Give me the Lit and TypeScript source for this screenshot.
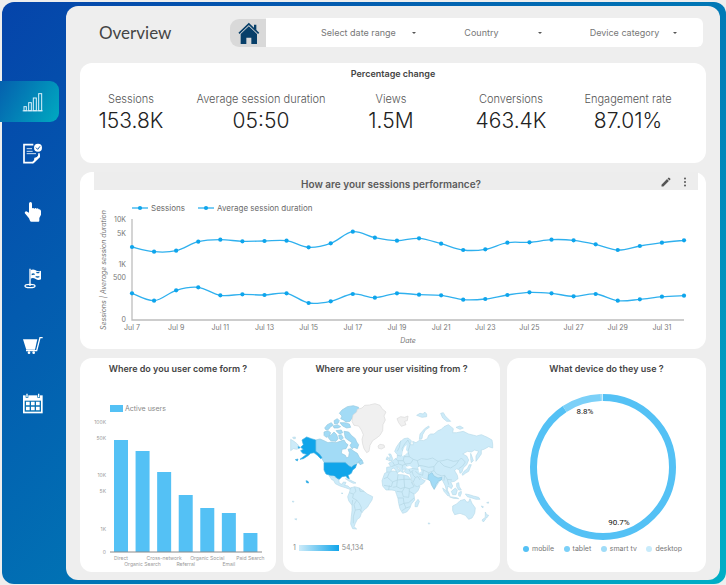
import { LitElement, html, svg, css } from "lit";
import { customElement } from "lit/decorators.js";

const FONT = css`Inter, "Open Sans", sans-serif`;

/* ---------- sidebar ---------- */

const navItems = [
  {
    label: "Overview",
    icon: svg`<g fill="none" stroke="#d9f1fb" stroke-width="3">
      <path d="M2 59.500H62"/><rect x="6" y="47" width="7" height="12"/><rect x="20" y="35" width="8" height="24"/>
      <rect x="34" y="21" width="9" height="38"/><rect x="50" y="8" width="9" height="51"/></g>`,
  },
  {
    label: "Reports",
    icon: svg`<path d="M34 8H6V62H32L51 44V34" fill="none" stroke="#fff" stroke-width="5"/>
      <path d="M31 64Q38 58 37 47Q45 48 50 38H54V45L35 64Z" fill="#fff"/>
      <path d="M14 20H30M14 28H32M14 35H42" stroke="#cfe2f3" stroke-width="3"/>
      <circle cx="48" cy="17" r="12" fill="#fff"/><path d="M42 17L47 22L54 13" fill="none" stroke="#0753aa" stroke-width="3"/>`,
  },
  {
    label: "Clicks",
    icon: svg`<path fill="#fff" d="M21 11Q21 6 25.500 6T30 11V25Q34 22 37 26Q41 22 44 26Q48 23 50 28Q56 27 57 33V44L52 54V62Q52 65 49 65H28Q25 65 24 62L21 55L8 39Q8 34 13 34L21 38Z"/>`,
  },
  {
    label: "Goals",
    icon: svg`<path d="M22 5H26V57H22Z" fill="#fff"/><path d="M26 9Q34 5 41 10T57 11V37Q49 41 41 36T26 35Z" fill="#fff"/>
      <path d="M29 20Q34 17 38 20V24Q34 22 29 25ZM41 27Q47 29 52 27V31Q47 33 41 31ZM43 14Q48 16 52 14V18Q47 20 43 18Z" fill="#0660ab"/>
      <ellipse cx="24" cy="57" rx="15" ry="5" fill="none" stroke="#fff" stroke-width="4"/>`,
  },
  {
    label: "Sales",
    icon: svg`<path d="M3 16H46L39 47H13Z" fill="#fff"/><path d="M62 11H54L44 50H12" fill="none" stroke="#fff" stroke-width="4"/>
      <circle cx="21" cy="56" r="4" fill="#fff"/><circle cx="35" cy="56" r="4" fill="#fff"/>`,
  },
  {
    label: "Calendar",
    icon: svg`<path d="M3 10H62V64H3Z" fill="#fff"/><path d="M11 8H19V17H11ZM46 8H54V17H46Z" fill="#0770b3"/>
      <path d="M13 5H17V15H13ZM48 5H52V15H48Z" fill="#fff"/><path d="M8 26H57V59H8Z" fill="#0770b3"/>
      <path d="M12 29H23V40H12ZM27 29H38V40H27ZM42 29H53V40H42ZM12 44H23V55H12ZM27 44H38V55H27ZM42 44H53V55H42Z" fill="#fff"/>`,
  },
];

@customElement("side-nav")
class SideNav extends LitElement {
  static styles = css`
    :host { display: block; padding-top: 79px; }
    nav { display: grid; grid-template-rows: 41px 61px 55px 79px 55px 61px; }
    a { display: flex; align-items: center; padding-left: 20px; }
    a.active {
      margin: 0 7px 0 -2px; padding-left: 22px; border-radius: 0 9px 9px 0;
      background: linear-gradient(120deg, #0560ae, #00aac1);
    }
    svg { display: block; width: 22px; height: 22px; }
  `;
  render() {
    return html`<nav aria-label="Sections">
      ${navItems.map((n, i) => html`<a href="#${n.label.toLowerCase()}" class=${i === 0 ? "active" : ""} aria-label=${n.label}>
        <svg viewBox="0 0 66 66" aria-hidden="true">${n.icon}</svg></a>`)}
    </nav>`;
  }
}

/* ---------- line chart ---------- */

// Heights above the baseline, in thirds of a chart unit.
const sessions = [219, 205, 208, 235, 241, 236, 237, 238, 218, 230, 265, 247, 238, 245, 229, 210, 212, 232, 233, 241, 239, 227, 210, 222, 232, 239];
const duration = [80, 58, 89, 98, 74, 77, 75, 80, 51, 56, 78, 67, 80, 76, 74, 61, 63, 75, 83, 80, 71, 78, 58, 62, 70, 73];
const BASE = 130;
const LEFT = 38;
const STEP = 552 / 25;

type Pt = [number, number];
const toPoints = (d: number[]): Pt[] => d.map((v, i) => [LEFT + i * STEP, BASE - v / 3]);
const smooth = (p: Pt[]) =>
  p.slice(1).reduce((s, c, k) => {
    const a = p[k], before = p[k - 1] ?? a, after = p[k + 2] ?? c;
    return `${s}C${a[0] + (c[0] - before[0]) / 6} ${a[1] + (c[1] - before[1]) / 6} ${c[0] - (after[0] - a[0]) / 6} ${c[1] - (after[1] - a[1]) / 6} ${c[0]} ${c[1]}`;
  }, `M${p[0][0]} ${p[0][1]}`);

@customElement("line-chart")
class LineChart extends LitElement {
  static styles = css`
    :host { display: block; }
    svg { display: block; width: 100%; font-family: ${FONT}; overflow: visible; }
    .line { fill: none; stroke: #2fb0ee; stroke-width: 1.3; }
    .dot { fill: #0ea5ec; }
    .axis { fill: none; stroke: #bdbdbd; stroke-width: 1.3; }
    .tick { font-size: 7px; fill: #777; }
    .end { text-anchor: end; }
    .mid { text-anchor: middle; }
    .name { font-size: 8px; fill: #6b6b6b; }
    .axis-name { font-size: 7px; font-style: italic; fill: #777; text-anchor: middle; }
  `;
  render() {
    const series = [sessions, duration].map(toPoints);
    return html`<svg viewBox="0 0 604 159" role="img" aria-label="Sessions and average session duration by date">
      ${[[38, "Sessions"], [104, "Average session duration"]].map(([x, name]) => svg`
        <path class="line" d="M${x} 18h16"/><circle class="dot" cx=${+x + 8} cy="18" r="2.1"/>
        <text class="name" x=${+x + 19} y="21">${name}</text>`)}
      ${([[30, "10K"], [44, "5K"], [75, "1K"], [88, "500"], [130, "0"]] as [number, string][]).map(([y, t]) =>
        svg`<text class="tick end" x="32" y=${y + 2}>${t}</text>`)}
      <path class="axis" d="M38 29V130H590"/>
      ${series.map((p) => svg`<path class="line" d=${smooth(p)}/>${p.map((c) => svg`<circle class="dot" cx=${c[0]} cy=${c[1]} r="2.1"/>`)}`)}
      ${Array.from({ length: 13 }, (_, i) => svg`<text class="tick mid" x=${LEFT + i * 2 * STEP} y="140">Jul ${7 + i * 2}</text>`)}
      <text class="axis-name" x="314" y="153">Date</text>
      <text class="axis-name" transform="translate(12 80) rotate(-90)">Sessions | Average session duration</text>
    </svg>`;
  }
}

/* ---------- bar chart ---------- */

const channels: [string, number][] = [
  ["Direct", 112], ["Organic Search", 101], ["Cross-network", 80], ["Referral", 57],
  ["Organic Social", 44], ["Email", 39], ["Paid Search", 19],
];

@customElement("channel-chart")
class ChannelChart extends LitElement {
  static styles = css`
    :host { display: block; }
    svg { display: block; width: 100%; font-family: ${FONT}; }
    .bar { fill: #54c1f5; }
    .axis { stroke: #8a8a8a; stroke-width: 1; }
    .name { font-size: 7px; fill: #888; }
    .tick { font-size: 5px; fill: #999; text-anchor: end; }
    .cat { font-size: 5px; fill: #999; text-anchor: middle; }
  `;
  render() {
    return html`<svg viewBox="0 0 196 172" role="img" aria-label="Active users by channel">
      <rect class="bar" x="30" y="7" width="13" height="7"/><text class="name" x="45" y="13">Active users</text>
      ${([[24, "100K"], [40, "50K"], [77, "10K"], [93, "5K"], [131, "1K"], [154, "0"]] as [number, string][]).map(([y, t]) =>
        svg`<text class="tick" x="26" y=${y + 2}>${t}</text>`)}
      ${channels.map(([name, h], i) => {
        const x = 34 + (i * 151) / 7;
        return svg`<rect class="bar" x=${x} y=${154 - h} width="14" height=${h}/>
          <text class="cat" x=${x + 7} y=${i % 2 ? 168 : 162}>${name}</text>`;
      })}
      <path class="axis" d="M30 154H182"/>
    </svg>`;
  }
}

/* ---------- world map ---------- */

const land = [
  // Mexico and Central America, Caribbean
  "M147 257L160 261 168 263 176 268 178 280 186 283 190 276 198 277 194 286 204 288 210 294 216 294 210 298 196 293 180 288 166 281 160 270 156 270 152 264Z",
  "M196 266L206 268 218 274 228 279 220 280 208 274Z",
  // South America
  "M212 294L224 290 238 294 252 304 262 312 278 320 276 330 268 342 262 352 252 360 244 370 240 382 232 388 226 400 222 410 230 417 218 416 212 402 214 380 216 362 216 346 206 332 203 320 208 308Z",
  // Africa, Madagascar
  "M314 250L322 246 340 243 350 245 354 254 366 254 384 258 392 268 400 282 408 289 420 289 414 302 402 314 404 330 394 342 390 354 380 366 368 370 360 356 356 340 354 326 350 314 346 302 336 300 318 300 308 288 306 272Z",
  "M406 338L414 328 418 334 412 350 405 350Z",
  // Europe and Asia
  "M344 184L350 170 360 156 372 146 384 144 394 152 392 164 400 164 398 154 408 158 420 150 430 152 442 146 446 136 452 132 462 132 474 122 484 118 492 110 505 104 520 116 518 128 530 128 550 124 566 132 590 138 604 134 622 142 636 150 638 162 638 174 626 170 612 178 604 180 604 192 594 206 588 214 588 198 596 184 584 180 574 186 562 184 548 192 560 198 566 210 560 224 550 234 546 246 540 250 538 240 530 236 524 242 532 256 534 266 524 274 512 276 518 288 514 296 504 288 502 300 508 312 500 304 496 288 486 268 478 274 468 290 462 298 454 284 450 270 436 267 424 262 418 258 426 268 436 272 430 280 412 290 406 288 394 268 390 252 380 250 372 244 378 238 368 238 370 248 362 244 356 232 350 230 360 244 352 248 342 234 336 236 332 246 320 246 320 232 332 230 326 220 336 214 346 206 352 204 352 194Z",
  // Britain, Ireland, Japan, Sakhalin
  "M326 212L330 200 326 192 332 192 338 206 336 212Z",
  "M318 208L322 200 326 204 323 210Z",
  "M546 252L552 244 562 236 568 224 574 224 570 234 566 244 556 250 548 256Z",
  "M572 190L576 200 580 212 574 218 572 206Z",
  // Arctic islands
  "M418 148L420 132 434 116 446 108 448 112 436 120 428 134 426 146Z",
  "M482 70L490 68 496 78 504 86 512 94 500 94 488 84Z",
  "M410 76L420 70 430 72 434 66 440 72 440 80 426 82Z",
  "M528 112L540 108 550 114 540 118Z",
  // South-East Asia
  "M488 294L498 302 510 316 504 318 492 304Z",
  "M508 320L530 323 536 326 520 325Z",
  "M514 304L526 294 532 300 528 314 518 314Z",
  "M530 280L536 278 538 290 544 300 536 300 530 290Z",
  "M536 308L544 304 544 310 540 320 536 316Z",
  "M556 312L568 314 580 318 596 322 600 328 588 328 576 324 562 320Z",
  // Australia, New Zealand
  "M518 348L530 342 540 332 554 328 560 336 566 336 570 326 576 340 586 354 584 370 576 384 566 388 556 376 540 370 524 374 518 362Z",
  "M616 366L620 374 626 376 620 384 616 380Z",
  "M606 390L616 382 618 386 610 396Z",
  // Chukotka
  "M32 148L42 154 52 162 60 174 50 178 40 176 32 182Z",
  "M38 142L46 141 46 146 40 146ZM604 348L610 350 608 354ZM620 338L626 336 625 340ZM44 387L50 386 49 390ZM36 334L42 334 40 337ZM184 309L188 309 187 312ZM444 399L450 400 447 403Z",
];
const canada = [
  // Mainland around Hudson Bay
  "M107 150L120 147 132 152 144 158 156 156 168 158 180 154 192 150 198 160 204 164 198 176 186 178 184 190 196 196 200 204 206 200 208 188 204 178 212 176 222 184 232 190 238 202 246 210 240 218 228 220 222 226 212 232 206 226 196 217 132 217 126 206 116 190 107 186Z",
  // Ellesmere and neighbours
  "M178 70L186 60 202 50 220 47 236 52 234 62 224 72 216 84 210 94 198 96 190 90 182 86 186 78Z",
  "M180 98L194 98 208 102 212 112 200 114 188 108Z",
  "M162 92L172 86 178 92 174 100 164 102Z",
  "M134 114L142 104 154 98 160 106 152 110 146 118 138 120Z",
  "M160 108L172 104 182 110 174 114 162 114Z",
  // Victoria, Banks, Baffin
  "M132 126L144 122 152 128 148 138 138 142 132 136Z",
  "M144 142L154 134 162 126 170 134 174 146 168 154 152 152Z",
  "M168 122L184 120 188 128 178 132Z",
  "M176 136L184 134 190 144 184 150 178 146Z",
  "M192 124L206 126 214 136 226 146 230 156 236 164 232 176 222 172 216 176 210 166 216 158 204 150 196 144Z",
  "M236 214L246 210 250 220 240 224Z",
];
const usa = [
  "M132 218L196 218 206 227 214 232 222 226 230 222 226 234 218 240 214 250 204 256 208 266 202 264 198 258 186 260 178 268 170 264 164 258 150 256 138 252 132 240Z",
  "M66 150L80 141 94 146 107 150 107 184 118 192 126 203 122 206 112 196 102 188 92 190 84 197 70 206 60 208 72 199 80 193 68 190 62 182 70 178 62 172 70 164Z",
  "M78 272L84 274 86 279 80 278ZM46 209L54 207 52 213ZM54 170L60 172 56 175Z",
];
const noData = [
  "M219 75L230 66 232 58 246 54 254 46 268 45 285 41 300 46 306 56 318 66 312 78 316 90 309 104 308 122 300 136 290 144 278 152 270 166 267 184 260 188 252 176 248 162 246 148 250 134 244 120 236 108 222 106 216 94Z",
  "M294 168L300 163 312 165 314 172 304 177 296 175Z",
  "M351 86L362 80 374 82 384 78 382 92 374 94 378 104 364 109 356 98Z",
];
const borders = [
  // South America
  "M208 308L220 312 228 304 224 292M220 312L218 324 230 330 238 340 244 352 242 364M218 330L216 346M230 330L222 344 226 360 220 380 220 400M238 294L240 304 252 304M226 360L240 358 246 368",
  // Africa
  "M328 248L322 262 312 266M322 262L338 276 352 270 354 254M338 276L334 290 312 286M352 270L372 268 372 256M372 268L392 268M352 270L350 290 338 292M350 290L362 296 374 292 372 268M374 292L388 296 402 290 394 276M350 304L366 306 374 292M366 306L370 320 386 322 388 304 402 312M354 324L370 324 372 340 386 338 402 324M372 340L358 346M372 340L378 354 390 350M326 300L328 286M388 304L388 296M378 354L366 362",
  // Europe
  "M352 196L362 198 370 190 366 176 374 162 384 150M362 152L358 172 352 184M384 150L390 164 384 184 388 200 400 208 392 220 376 222 370 212 354 212 346 206M354 212L356 222 344 226 334 230M356 222L368 226 376 222M368 226L366 236M376 222L384 232 400 236 414 238M370 212L372 200 388 200M344 226L338 216M386 236L392 248 400 240M376 200L370 190",
  // Asia
  "M400 208L412 212 424 206 442 208 458 204 474 214 488 212 502 208 520 214 536 212 544 204 556 216 548 228 536 236M412 212L416 226 430 228 446 232 462 230 474 214M416 226L414 238 430 240 446 248 462 242 462 230M430 240L428 256 416 252 406 244M446 248L444 268M406 262L414 260 420 270M400 256L406 262 400 276M480 216L492 228 512 234 528 224 536 212M462 242L470 252 486 258 494 256 502 268 516 270M494 256L492 272M502 268L506 284M396 244L400 256",
];

@customElement("world-map")
class WorldMap extends LitElement {
  static styles = css`
    :host { display: block; }
    svg { display: block; width: 100%; }
    path { stroke-width: 2; stroke-linejoin: round; }
    .land { fill: #cdebf9; stroke: #b8dbea; }
    .canada { fill: #a2dbf6; stroke: #94c8e0; }
    .usa { fill: #10a5ea; stroke: #3aaee2; }
    .none { fill: #f0f0f0; stroke: #dadada; }
    .border { fill: none; stroke: #b2d4e3; }
    .lake { fill: #fff; stroke: none; }
    .scale { display: flex; align-items: center; gap: 3px; padding: 10px 0 0 10px; font: 7px/9px ${FONT}; color: #888; }
    .ramp { width: 40px; height: 6px; background: linear-gradient(90deg, #cdebf9, #10a5ea); }
  `;
  render() {
    return html`<svg viewBox="9 30 651 400" role="img" aria-label="Users by country">
        ${land.map((d) => svg`<path class="land" d=${d}/>`)}
        ${borders.map((d) => svg`<path class="border" d=${d}/>`)}
        <path class="lake" d="M368 184L374 170 380 164 378 180 384 186 374 196 366 198ZM376 230L390 228 398 234 384 236ZM414 232L420 230 424 244 418 248Z"/>
        <path class="canada" d="M446 254L456 248 462 258 474 264 486 262 484 270 476 272 468 284 463 298 456 286 452 274 444 268Z"/>
        ${canada.map((d) => svg`<path class="canada" d=${d}/>`)}
        ${usa.map((d) => svg`<path class="usa" d=${d}/>`)}
        ${noData.map((d) => svg`<path class="none" d=${d}/>`)}
      </svg>
      <div class="scale"><span>1</span><span class="ramp"></span><span>54,134</span></div>`;
  }
}

/* ---------- donut ---------- */

const devices = [
  { name: "mobile", share: 90.7, color: "#54c1f5" },
  { name: "tablet", share: 8.8, color: "#7bd0f8" },
  { name: "smart tv", share: 0.3, color: "#a0dcf8" },
  { name: "desktop", share: 0.2, color: "#c8ebfb" },
];

@customElement("device-chart")
class DeviceChart extends LitElement {
  static styles = css`
    :host { display: block; }
    svg { display: block; width: 100%; font: 8px Roboto, sans-serif; }
    circle { fill: none; stroke-width: 7; }
    text { text-anchor: middle; fill: #111; }
    ul {
      display: flex; justify-content: space-between; list-style: none; margin: 0; padding: 0 24px 0 16px;
      font: 7px/9px ${FONT}; color: #777;
    }
    li { display: flex; align-items: center; gap: 3px; }
    .dot { width: 6px; height: 6px; border-radius: 50%; }
  `;
  render() {
    let start = 0;
    return html`<svg viewBox="0 0 199 156" role="img" aria-label="Share of users by device">
        ${devices.map((d) => {
          const ring = svg`<circle cx="96" cy="79" r="69.500" pathLength="100" stroke=${d.color}
            stroke-dasharray="${d.share} 100" stroke-dashoffset=${-start} transform="rotate(-90 96 79)"/>`;
          start += d.share;
          return ring;
        })}
        <text x="78" y="26">8.8%</text><text x="112" y="137">90.7%</text>
      </svg>
      <ul>${devices.map((d) => html`<li><span class="dot" style="background:${d.color}"></span>${d.name}</li>`)}</ul>`;
  }
}

/* ---------- page ---------- */

const filters = ["Select date range", "Country", "Device category"];
const stats = [
  ["Sessions", "153.8K"], ["Average session duration", "05:50"], ["Views", "1.5M"],
  ["Conversions", "463.4K"], ["Engagement rate", "87.01%"],
];

@customElement("app-root")
class AppRoot extends LitElement {
  static styles = css`
    * { box-sizing: border-box; }
    :host {
      display: flex; box-sizing: border-box; min-height: 100vh; padding: 2px 0 1px 2px;
      background: #eee; font-family: ${FONT}; color: #444;
    }
    .frame {
      flex: 1; display: flex; border-radius: 12px;
      background: linear-gradient(135deg, #0544aa, #0172b4 50%, #00afc6);
    }
    side-nav { width: 64px; }
    main {
      flex: 1; min-width: 0; display: flex; flex-direction: column; gap: 9px;
      margin: 4px 6px 4px 0; padding: 12px 14px 8px; border-radius: 12px; background: #eee;
    }
    header { display: flex; align-items: center; padding: 0 3px 0 19px; margin-bottom: 7px; }
    h1 { flex: 0 0 131px; margin: 0; font: 400 17px/29px Lato, sans-serif; color: #444; }
    .home {
      display: flex; align-items: center; justify-content: center; width: 36px; height: 28px; padding: 0 0 0 2px;
      border: 0; border-radius: 9px 0 0 9px; background: #d9d9d9;
    }
    .home svg { width: 22px; height: 22px; }
    .filters {
      flex: 1; display: grid; grid-template-columns: 95fr 77fr 87fr; gap: 48px; align-items: center;
      height: 29px; padding: 0 26px 0 55px; border-radius: 0 6px 6px 0; background: #fff;
    }
    .filter { display: grid; align-items: center; }
    .filter > * { grid-area: 1 / 1; }
    select {
      appearance: none; width: 100%; margin: 0; padding: 0; border: 0; background: none;
      font: 9px/12px ${FONT}; color: #777;
    }
    .caret { justify-self: end; width: 4px; height: 2px; pointer-events: none; fill: #555; }
    .card { border-radius: 12px; background: #fff; }
    h2 { margin: 0; font-size: 9px; line-height: 22px; font-weight: 600; text-align: center; }
    .stats { padding-bottom: 28px; }
    dl { display: grid; grid-template-columns: 102fr 158fr 102fr 138fr 96fr; margin: 0; padding: 6px 30px 0 0; }
    dl div { text-align: center; white-space: nowrap; }
    dt { font-size: 11px; line-height: 16px; font-weight: 300; color: #555; }
    dd { margin: 0; font-size: 21px; line-height: 28px; font-weight: 300; color: #222; }
    .performance { padding: 0 8px 0 14px; }
    .bar { display: grid; align-items: center; height: 18px; background: #ededed; }
    .bar > * { grid-area: 1 / 1; }
    .bar h2 { padding: 6px 10px 0 0; font-size: 10px; line-height: 12px; color: #5a5a5a; }
    .actions { justify-self: end; display: flex; gap: 7px; padding: 2px 7px 0 0; }
    .actions button { display: block; width: 12px; height: 12px; padding: 0; border: 0; background: none; }
    .actions svg { display: block; width: 12px; height: 12px; fill: #555; }
    .row { flex: 1; display: grid; grid-template-columns: 196fr 217fr 199fr; gap: 7px; }
    channel-chart { margin-top: 18px; }
    world-map { margin-top: 20px; }
    device-chart { margin-top: 8px; }
  `;
  render() {
    return html`<div class="frame">
      <side-nav></side-nav>
      <main>
        <header>
          <h1>Overview</h1>
          <button class="home" aria-label="Home"><svg viewBox="0 0 66 66" aria-hidden="true" fill="#073f69">
            <path d="M48 8H55V26L48 19Z"/><path d="M3 34L32.500 6L62 34" fill="none" stroke="#073f69" stroke-width="5"/>
            <path d="M8 36L32.500 13L57 36V66H40V47H25V66H8Z"/></svg></button>
          <div class="filters">
            ${filters.map((f) => html`<div class="filter">
              <select aria-label=${f}><option>${f}</option></select>
              <svg class="caret" viewBox="0 0 4 2" aria-hidden="true"><path d="M0 0H4L2 2Z"/></svg>
            </div>`)}
          </div>
        </header>
        <section class="card stats">
          <h2>Percentage change</h2>
          <dl>${stats.map(([k, v]) => html`<div><dt>${k}</dt><dd>${v}</dd></div>`)}</dl>
        </section>
        <section class="card performance">
          <div class="bar">
            <h2>How are your sessions performance?</h2>
            <div class="actions">
              <button aria-label="Edit"><svg viewBox="0 0 24 24"><path d="M3 17.250V21h3.750L17.810 9.940l-3.750-3.750L3 17.250zM20.710 7.040a1 1 0 0 0 0-1.410l-2.340-2.340a1 1 0 0 0-1.410 0l-1.830 1.830 3.750 3.750 1.830-1.830z"/></svg></button>
              <button aria-label="More"><svg viewBox="0 0 24 24"><circle cx="12" cy="5" r="2"/><circle cx="12" cy="12" r="2"/><circle cx="12" cy="19" r="2"/></svg></button>
            </div>
          </div>
          <line-chart></line-chart>
        </section>
        <div class="row">
          <section class="card"><h2>Where do you user come form ?</h2><channel-chart></channel-chart></section>
          <section class="card"><h2>Where are your user visiting from ?</h2><world-map></world-map></section>
          <section class="card"><h2>What device do they use ?</h2><device-chart></device-chart></section>
        </div>
      </main>
    </div>`;
  }
}
